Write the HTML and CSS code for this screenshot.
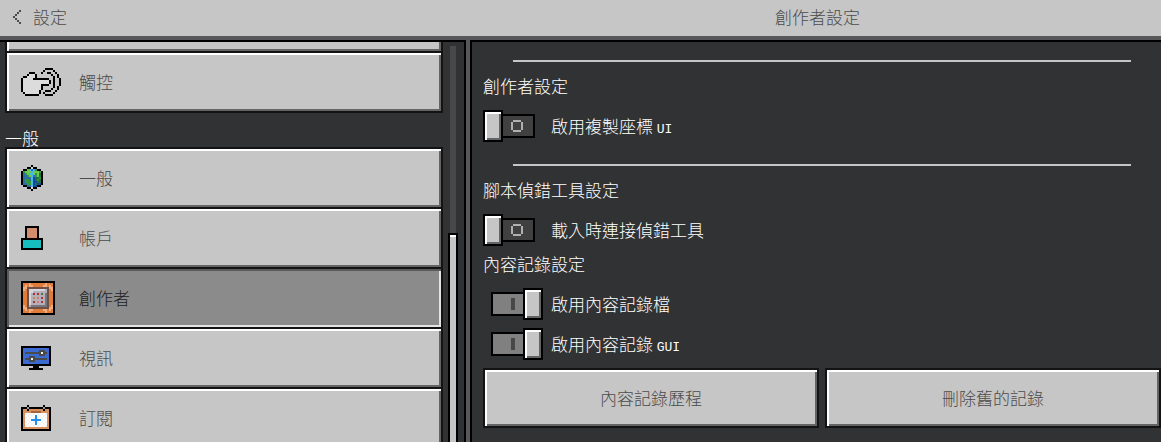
FILE: index.html
```html
<!DOCTYPE html>
<html lang="zh-Hant">
<head>
    <meta charset="UTF-8">
    <meta name="viewport" content="width=device-width, initial-scale=1.0">
    <title>設定</title>
    <link rel="stylesheet" href="styles.css">
</head>
<body>
    <header class="topbar">
        <div class="topbar-left">
            <button type="button" class="back">
                <svg class="pixel" data-icon="back"></svg>
                <span>設定</span>
            </button>
        </div>
        <h1>創作者設定</h1>
    </header>

    <div class="panels">
        <aside class="sidebar">
            <nav class="menu">
                <button type="button" class="menu-item scrolled-item" aria-hidden="true" tabindex="-1"></button>
                <button type="button" class="menu-item">
                    <span class="icon"><svg class="pixel" data-icon="touch"></svg></span>
                    <span>觸控</span>
                </button>
                <h2 class="menu-title">一般</h2>
                <button type="button" class="menu-item">
                    <span class="icon"><svg class="pixel" data-icon="globe"></svg></span>
                    <span>一般</span>
                </button>
                <button type="button" class="menu-item">
                    <span class="icon"><svg class="pixel" data-icon="account"></svg></span>
                    <span>帳戶</span>
                </button>
                <button type="button" class="menu-item selected" aria-current="page">
                    <span class="icon"><svg class="pixel" data-icon="creator"></svg></span>
                    <span>創作者</span>
                </button>
                <button type="button" class="menu-item">
                    <span class="icon"><svg class="pixel" data-icon="video"></svg></span>
                    <span>視訊</span>
                </button>
                <button type="button" class="menu-item">
                    <span class="icon"><svg class="pixel" data-icon="calendar"></svg></span>
                    <span>訂閱</span>
                </button>
            </nav>
            <div class="scrollbar">
                <div class="scroll-track"></div>
                <div class="scroll-thumb"></div>
            </div>
        </aside>

        <main class="content">
            <hr>
            <h2>創作者設定</h2>
            <label class="toggle-row">
                <input type="checkbox" class="toggle">
                <span>啟用複製座標 <span class="latin">UI</span></span>
            </label>

            <hr>
            <h2>腳本偵錯工具設定</h2>
            <label class="toggle-row">
                <input type="checkbox" class="toggle">
                <span>載入時連接偵錯工具</span>
            </label>

            <h2>內容記錄設定</h2>
            <label class="toggle-row">
                <input type="checkbox" class="toggle" checked>
                <span>啟用內容記錄檔</span>
            </label>
            <label class="toggle-row">
                <input type="checkbox" class="toggle" checked>
                <span>啟用內容記錄 <span class="latin">GUI</span></span>
            </label>

            <div class="actions">
                <button type="button" class="action">內容記錄歷程</button>
                <button type="button" class="action">刪除舊的記錄</button>
            </div>
        </main>
    </div>

    <script src="icons.js"></script>
</body>
</html>
```
FILE: styles.css
```css
*, *::before, *::after {
    box-sizing: border-box;
}
body {
    margin: 0;
    height: 100vh;
    display: flex;
    flex-direction: column;
    overflow: hidden;
    background: #58585a;
    color: #fff;
    font-family: "Noto Sans CJK TC", sans-serif;
    font-size: 17px;
    font-weight: 300;
    line-height: 20px;
}
h1, h2 {
    margin: 0;
    font-size: 17px;
    font-weight: 300;
    line-height: 20px;
}
button {
    font: inherit;
    color: #4c4c4c;
    cursor: pointer;
}
.pixel {
    display: block;
    shape-rendering: crispEdges;
}
.latin {
    font-family: "Liberation Mono", monospace;
    font-size: 13px;
    line-height: 1;
}

/* top bar */
.topbar {
    display: flex;
    align-items: center;
    height: 40px;
    padding-bottom: 2px;
    background: #c6c6c6;
    border-bottom: 4px solid #58585a;
    color: #4c4c4c;
}
.topbar-left {
    flex: 0 0 474px;
}
.topbar h1 {
    flex: 1;
    text-align: center;
}
.back {
    display: flex;
    align-items: center;
    gap: 12px;
    padding: 0 13px;
    border: none;
    background: none;
}

/* panels */
.panels {
    flex: 1;
    display: flex;
    gap: 4px;
    min-height: 0;
}
.sidebar {
    flex: 0 0 466px;
    display: flex;
    overflow: hidden;
    background: #313233;
    border-top: 2px solid #000;
    border-right: 2px solid #000;
}
.menu {
    flex: 1;
    padding-left: 5px;
}
.menu-item, .action {
    background: #c6c6c6;
    border: 2px solid #131313;
    box-shadow: inset 2px 2px #fff, inset -2px -2px #656465;
}
.menu-item {
    display: flex;
    align-items: center;
    width: 100%;
    height: 62px;
    padding: 0 14px;
    text-align: left;
}
.menu-item + .menu-item {
    margin-top: -2px;
}
.scrolled-item {
    margin-top: -51px;
}
.menu-item.selected {
    background: #8b8b8b;
    color: #1e1e1e;
    box-shadow: inset 2px 2px #5a5a5a, inset -2px -2px #e4e4e4;
}
.icon {
    width: 58px;
}
.menu-title {
    padding-top: 15px;
    height: 34px;
}

/* scrollbar */
.scrollbar {
    display: flex;
    flex-direction: column;
    align-items: center;
    width: 10px;
    margin: 4px 6px 0 5px;
}
.scroll-track {
    flex: 47;
    width: 6px;
    background: #484849;
}
.scroll-thumb {
    flex: 52;
    width: 10px;
    background: #c6c6c6;
    border: 2px solid #000;
    border-bottom: none;
    box-shadow: inset 0 2px #fff;
}

/* settings */
.content {
    flex: 1;
    display: flex;
    flex-direction: column;
    padding: 4px 0 0 11px;
    background: #313233;
    border-top: 2px solid #000;
    border-left: 2px solid #000;
}
.content hr {
    height: 2px;
    margin: 14px 30px;
    border: none;
    background: #c6c6c6;
}
.content h2 {
    margin-bottom: 14px;
}
.toggle-row {
    display: flex;
    align-items: center;
    align-self: flex-start;
    gap: 8px;
    margin-bottom: 8px;
    cursor: pointer;
}
.toggle {
    appearance: none;
    display: grid;
    width: 60px;
    height: 32px;
    margin: 0;
    cursor: pointer;
}
.toggle::before {
    content: "";
    grid-area: 1 / 1;
    margin: 4px 8px;
    border: 2px solid #000;
    background:
        linear-gradient(#b0b0b0, #b0b0b0) 20px 4px / 8px 2px,
        linear-gradient(#b0b0b0, #b0b0b0) 20px 14px / 8px 2px,
        linear-gradient(#b0b0b0, #b0b0b0) 18px 6px / 2px 8px,
        linear-gradient(#b0b0b0, #b0b0b0) 28px 6px / 2px 8px,
        #404040;
    background-repeat: no-repeat;
}
.toggle::after {
    content: "";
    grid-area: 1 / 1;
    justify-self: start;
    width: 20px;
    height: 32px;
    border: 2px solid #000;
    background: #c6c6c6;
    box-shadow: inset 2px 2px #fff, inset -2px -2px #656465;
}
.toggle:checked::before {
    background: linear-gradient(#484848, #484848) 18px 4px / 4px 12px no-repeat, #808080;
}
.toggle:checked::after {
    justify-self: end;
}
.actions {
    display: grid;
    grid-template-columns: 1fr 1fr;
    gap: 6px;
}
.action {
    height: 60px;
    padding: 0;
}
```
FILE: icons.js
```js
// Every character is one 2x2 pixel, a dot is transparent
const colors = {
    k: '#000000', d: '#4c4c4c', w: '#dcdcdc', W: '#ffffff',
    g: '#2f9a38', G: '#6cc850', e: '#1f7045', b: '#2a70c0', B: '#2f6f9f', n: '#154a94', c: '#45b5ea',
    s: '#d28e6c', t: '#16bfbe',
    o: '#e07b39', l: '#eeac80', m: '#6f5044', L: '#d6d6de', p: '#b4b0ba', D: '#77757f', r: '#b02e35', R: '#d87878', y: '#c09040', v: '#4c7a35',
    u: '#3b6bd0', q: '#4a4a4a', O: '#d8905f', M: '#a8633c', h: '#9a9a9a', P: '#2090ef', a: '#f2f2f2'
};

const icons = {
    back: [
        '...d',
        '..d.',
        '.d..',
        'd...',
        '.d..',
        '..d.',
        '...d'
    ],
    touch: [
        '............kkkk....',
        '...........k....k...',
        '....kkk...k..kk..k..',
        '...kwwwk.......k..k.',
        '.kkwwwwk........k.k.',
        'kwwwwwkkkkkkkk..k..k',
        'kwwwwwwwwwwwwwk.k..k',
        'kwwwwwwwwwwwwwk.k..k',
        'kwwwwwwwwwkkkk..k..k',
        'kwwwwwwwwwk.....k.k.',
        'kwwwwwwwwwk....k..k.',
        'kwwwwwwwwk..kkk..k..',
        '.kwwwwwwwk.k....k...',
        '..kkkkkkk...kkkk....'
    ],
    globe: [
        '.....k.....',
        '...kkwkk...',
        '.kkGcbcgkk.',
        'kgGGGcGGGgk',
        'kBgGccGgGek',
        'kBBgGcbgGek',
        'kBBBBcneegk',
        'kBggBcnegek',
        'kBgggcnneek',
        'kBBggcnennk',
        '.kkBBcnnkk.',
        '...kkwkk...',
        '.....k.....'
    ],
    account: [
        '..kkkkkkk..',
        '..ksssssk..',
        '..ksssssk..',
        '..ksssssk..',
        '..ksssssk..',
        '..ksssssk..',
        'kkkkkkkkkkk',
        'ktttttttttk',
        'ktttttttttk',
        'ktttttttttk',
        'ktttttttttk',
        'kkkkkkkkkkk'
    ],
    creator: [
        'kkkkkkkkkkkkkkkkk',
        'koooloooooooloook',
        'kolollooooollolok',
        'kllmmmmmmmmmmmllk',
        'klomLLLLLLLLpmolk',
        'koomLLpppppppmook',
        'koomLprprpvpDmook',
        'koomLpppppppDmook',
        'koomLpypRprpDmook',
        'koomLpppppppDmook',
        'koomLprpRprpDmook',
        'koomLpppppppDmook',
        'klompDDDDDDDDmolk',
        'kllmmmmmmmmmmmllk',
        'kolollooooollolok',
        'koooloooooooloook',
        'kkkkkkkkkkkkkkkkk'
    ],
    video: [
        'kkkkkkkkkkkkkkk',
        'kuuuuuuuuuuuuuk',
        'kuuuuuuuuqqquuk',
        'kuqqqqqqqqaqquk',
        'kuuuuuuuuqqquuk',
        'kuuuqqquuuuuuuk',
        'kuqqqaqqqqqqquk',
        'kuuuqqquuuuuuuk',
        'kuuuuuuuuuuuuuk',
        'kkkkkkkkkkkkkkk',
        '......kkk......',
        '....kkkkkkk....'
    ],
    calendar: [
        '...k.......k...',
        'kkkhkkkkkkkhkkk',
        'kOOkOOOOOOOkOOk',
        'kOOOOMMMMMOOOOk',
        'kOaWaWaWaWaWaOk',
        'kOWaWaWPWaWaWOk',
        'kOaWaWaPaWaWaOk',
        'kOWaWPPPPPWaWOk',
        'kOaWaWaPaWaWaOk',
        'kOWaWaWPWaWaWOk',
        'kOaWaWaWaWaWaOk',
        'kOOOOOOOOOOOOOk',
        'kkkkkkkkkkkkkkk'
    ]
};

document.querySelectorAll('svg[data-icon]').forEach(svg => {
    const rows = icons[svg.dataset.icon];
    const cols = rows[0].length;
    svg.setAttribute('viewBox', `0 0 ${cols} ${rows.length}`);
    svg.setAttribute('width', cols * 2);
    svg.setAttribute('height', rows.length * 2);
    rows.forEach((row, y) => {
        [...row].forEach((cell, x) => {
            if (!colors[cell]) return;
            const rect = document.createElementNS('http://www.w3.org/2000/svg', 'rect');
            rect.setAttribute('x', x);
            rect.setAttribute('y', y);
            rect.setAttribute('width', 1);
            rect.setAttribute('height', 1);
            rect.setAttribute('fill', colors[cell]);
            svg.appendChild(rect);
        });
    });
});
```
